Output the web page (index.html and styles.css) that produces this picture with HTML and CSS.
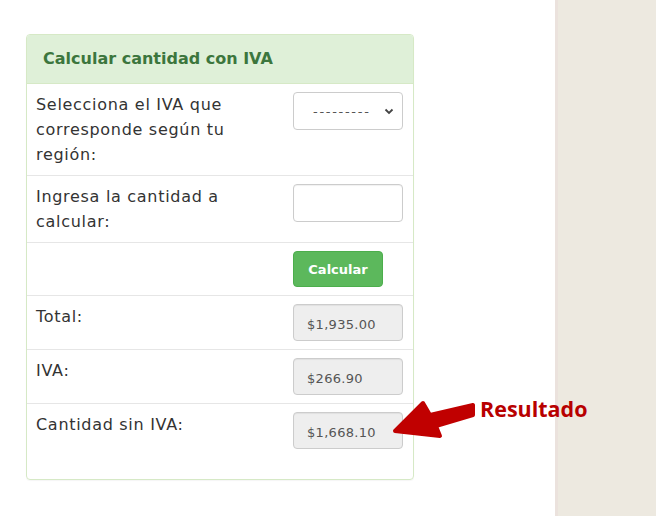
FILE: index.html
```html
<!DOCTYPE html>
<html lang="es">
<head>
    <meta charset="UTF-8">
    <meta name="viewport" content="width=device-width, initial-scale=1.0">
    <title>Calcular IVA</title>
    <link rel="stylesheet" href="styles.css">
</head>
<body>
    <div class="page">
        <div class="main">
            <div class="panel">
                <div class="panel-heading">Calcular cantidad con IVA</div>
                <div class="panel-body">
                    <div class="row">
                        <label for="iva">Selecciona el IVA que corresponde según tu región:</label>
                        <div class="select">
                            <span>---------</span>
                            <svg width="10" height="7" viewBox="0 0 10 7"><path d="M1.5 1.5 L5 5 L8.5 1.5" fill="none" stroke="#444" stroke-width="1.8"/></svg>
                        </div>
                    </div>
                    <div class="row">
                        <label for="cantidad">Ingresa la cantidad a calcular:</label>
                        <input type="text" id="cantidad" class="field">
                    </div>
                    <div class="row">
                        <span></span>
                        <div><button type="button">Calcular</button></div>
                    </div>
                    <div class="row">
                        <label>Total:</label>
                        <input type="text" class="field readonly" value="$1,935.00" readonly>
                    </div>
                    <div class="row">
                        <label>IVA:</label>
                        <input type="text" class="field readonly" value="$266.90" readonly>
                    </div>
                    <div class="row">
                        <label>Cantidad sin IVA:</label>
                        <input type="text" class="field readonly" value="$1,668.10" readonly>
                    </div>
                </div>
            </div>

            <div class="note">
                <svg width="86" height="46" viewBox="0 0 86 46">
                    <path d="M33 7 L40 19 L83 9 L83 19 L46 30 L50 40 L5 35 Z" fill="#c00000" stroke="#c00000" stroke-width="4" stroke-linejoin="round"/>
                </svg>
                <span>Resultado</span>
            </div>
        </div>
        <div class="side"></div>
    </div>
</body>
</html>
```

FILE: styles.css
```css
body {
    margin: 0;
    background: #fff;
    font-family: "DejaVu Sans", sans-serif;
    color: #333;
}

.page {
    display: flex;
    height: 516px;
}

.main {
    position: relative;
    width: 555px;
    padding: 34px 0 0 26px;
    box-sizing: border-box;
}

.side {
    flex: 1;
    background: #ede9e0;
    border-left: 3px solid #ebe2dd;
}

.panel {
    width: 388px;
    border: 1px solid #d6e9c6;
    border-radius: 4px;
    box-sizing: border-box;
    box-shadow: 0 1px 1px rgba(0, 0, 0, 0.04);
}

.panel-heading {
    background: #dff0d8;
    color: #3c763d;
    font-weight: bold;
    font-size: 16px;
    padding: 14px 16px 14px 16px;
    line-height: 20px;
    border-bottom: 1px solid #d6e9c6;
    border-radius: 3px 3px 0 0;
}

.panel-body {
    padding-bottom: 22px;
}

.row {
    display: grid;
    grid-template-columns: 1fr 110px;
    column-gap: 20px;
    padding: 8px 10px 8px 9px;
    border-top: 1px solid #e6e6e6;
}

.row:first-child {
    border-top: none;
}

.row label {
    font-size: 16px;
    letter-spacing: 0.7px;
    line-height: 25px;
}

.field {
    width: 110px;
    height: 38px;
    box-sizing: border-box;
    border: 1px solid #ccc;
    border-radius: 4px;
    padding: 0 13px;
    font-family: "DejaVu Sans", sans-serif;
    font-size: 13px;
    letter-spacing: 0.3px;
    color: #555;
    box-shadow: inset 0 1px 1px rgba(0, 0, 0, 0.06);
}

.readonly {
    height: 37px;
    background: #eee;
    padding-top: 3px;
}

.select {
    display: flex;
    align-items: center;
    justify-content: space-between;
    width: 110px;
    height: 38px;
    box-sizing: border-box;
    border: 1px solid #ccc;
    border-radius: 4px;
    padding: 0 8px 0 19px;
    font-size: 13px;
    letter-spacing: 1.7px;
    color: #555;
}

button {
    background-color: #5cb85c;
    border: 1px solid #4cae4c;
    color: white;
    font-family: "DejaVu Sans", sans-serif;
    font-weight: bold;
    font-size: 13px;
    width: 90px;
    height: 36px;
    border-radius: 4px;
    cursor: pointer;
}

.note {
    position: absolute;
    left: 390px;
    top: 396px;
    display: flex;
    align-items: flex-start;
}

.note span {
    margin-left: 4px;
    margin-top: -2px;
    color: #b80000;
    font-family: "Open Sans", sans-serif;
    font-weight: bold;
    font-size: 21.5px;
}
```
